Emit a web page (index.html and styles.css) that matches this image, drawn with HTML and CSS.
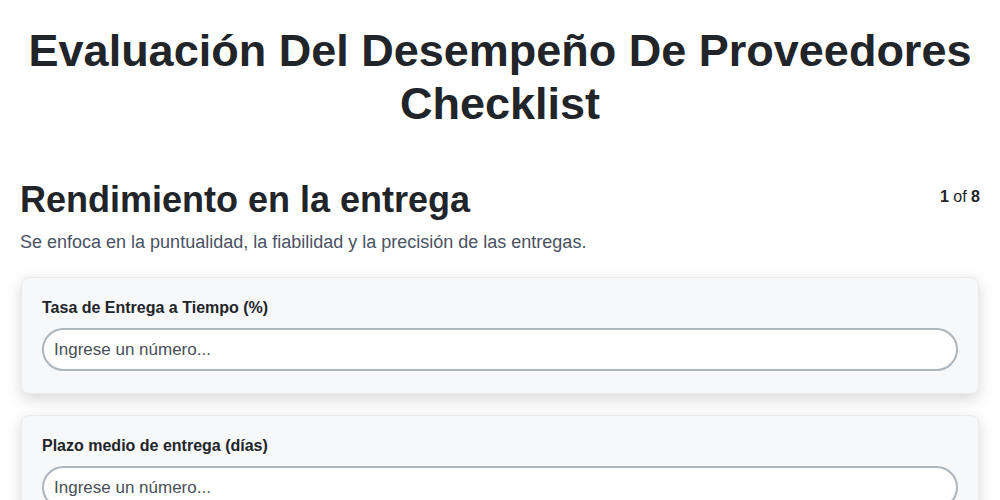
FILE: index.html
```html
<!DOCTYPE html>
<html lang="es">
<head>
    <meta charset="UTF-8">
    <meta name="viewport" content="width=device-width, initial-scale=1.0">
    <title>Evaluación Del Desempeño De Proveedores Checklist</title>
    <link rel="stylesheet" href="styles.css">
</head>
<body>
    <div class="page">
        <h1 class="title">Evaluación Del Desempeño De Proveedores Checklist</h1>

        <div class="section-head">
            <h2 class="section-title">Rendimiento en la entrega</h2>
            <div class="step"><b>1</b> of <b>8</b></div>
        </div>
        <p class="section-desc">Se enfoca en la puntualidad, la fiabilidad y la precisión de las entregas.</p>

        <div class="card">
            <label class="card-label">Tasa de Entrega a Tiempo (%)</label>
            <input class="card-input" type="text" placeholder="Ingrese un número...">
        </div>

        <div class="card">
            <label class="card-label">Plazo medio de entrega (días)</label>
            <input class="card-input" type="text" placeholder="Ingrese un número...">
        </div>
    </div>
</body>
</html>
```

FILE: styles.css
```css
*{
    margin:0;
    padding:0;
    box-sizing: border-box;
}
body{
    background-color: white;
    color: #212529;
    font-family: "Liberation Sans", Arial, sans-serif;
}
.page{
    padding: 24px 20px;
}
.title{
    font-size: 45px;
    line-height: 53px;
    font-weight: bold;
    text-align: center;
    margin-bottom: 49px;
}
.section-head{
    display: flex;
    justify-content: space-between;
    align-items: flex-start;
}
.section-title{
    font-size: 36px;
    line-height: 42px;
    font-weight: bold;
}
.step{
    font-size: 16px;
    margin-top: 9px;
}
.section-desc{
    font-size: 18px;
    line-height: 21px;
    color: #4a5263;
    margin-top: 11px;
    margin-bottom: 24px;
}
.card{
    background-color: #f7f8fa;
    border: 1px solid #e8eaee;
    border-radius: 8px;
    box-shadow: 0 5px 15px rgba(0,0,0,0.16);
    padding: 20px 20px 22px 20px;
    margin: 0 1px 21px 1px;
}
.card-label{
    display: block;
    font-size: 16px;
    line-height: 19px;
    font-weight: bold;
    margin-bottom: 11px;
}
.card-input{
    display: block;
    width: 100%;
    height: 43px;
    border: 2px solid #adb5bd;
    border-radius: 22px;
    background-color: white;
    padding: 0 10px;
    font-size: 17px;
    font-family: "Liberation Sans", Arial, sans-serif;
    color: #212529;
}
.card-input::placeholder{
    color: #495057;
}
```
